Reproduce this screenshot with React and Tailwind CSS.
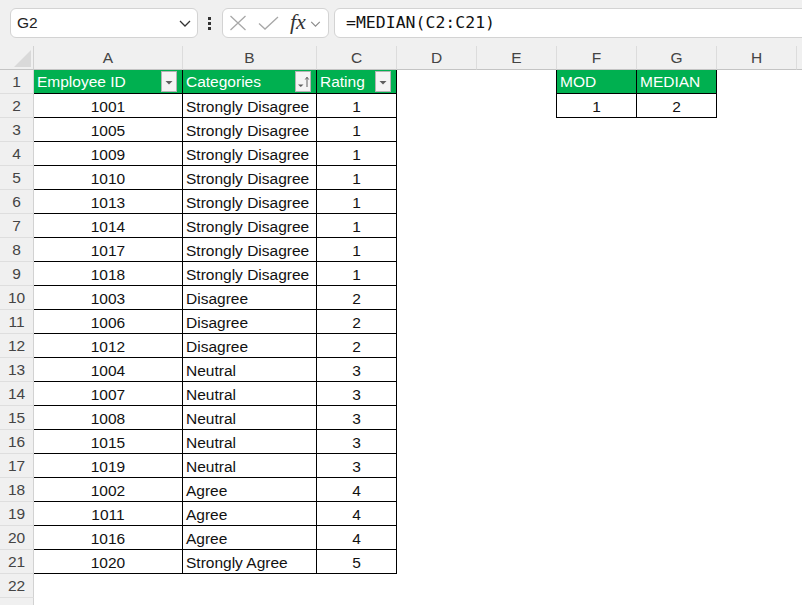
import React from "react";

const data = [
  ["1001", "Strongly Disagree", "1"],
  ["1005", "Strongly Disagree", "1"],
  ["1009", "Strongly Disagree", "1"],
  ["1010", "Strongly Disagree", "1"],
  ["1013", "Strongly Disagree", "1"],
  ["1014", "Strongly Disagree", "1"],
  ["1017", "Strongly Disagree", "1"],
  ["1018", "Strongly Disagree", "1"],
  ["1003", "Disagree", "2"],
  ["1006", "Disagree", "2"],
  ["1012", "Disagree", "2"],
  ["1004", "Neutral", "3"],
  ["1007", "Neutral", "3"],
  ["1008", "Neutral", "3"],
  ["1015", "Neutral", "3"],
  ["1019", "Neutral", "3"],
  ["1002", "Agree", "4"],
  ["1011", "Agree", "4"],
  ["1016", "Agree", "4"],
  ["1020", "Strongly Agree", "5"],
];

function Chevron({ color = "#333", w = 12, h = 7 }) {
  return (
    <svg width={w} height={h} viewBox="0 0 12 7" fill="none">
      <path d="M1 1 L6 6 L11 1" stroke={color} strokeWidth="1.3" />
    </svg>
  );
}

function FilterBtn({ sort }) {
  return (
    <div className="w-[16px] h-[21px] bg-[#f4f4f4] border border-[#b4b4b4] flex items-center justify-center shrink-0">
      {sort ? (
        <svg width="14" height="14" viewBox="0 0 14 14">
          <path d="M2 9.5 L7.5 9.5 L4.75 12 Z" fill="#5f5f5f" />
          <path d="M11 12 L11 2.5" stroke="#5f5f5f" strokeWidth="1" />
          <path d="M9.3 4.5 L11 2.2 L12.7 4.5" stroke="#5f5f5f" strokeWidth="1" fill="none" />
        </svg>
      ) : (
        <svg width="10" height="10" viewBox="0 0 10 10">
          <path d="M1.5 4 L8.5 4 L5 7.5 Z" fill="#5f5f5f" />
        </svg>
      )}
    </div>
  );
}

const colW = ["w-[149px]", "w-[134px]", "w-[80px]", "w-[80px]", "w-[80px]", "w-[80px]", "w-[80px]", "w-[80px]"];
const letters = ["A", "B", "C", "D", "E", "F", "G", "H"];

function RowHead({ n }) {
  return (
    <div className="w-[34px] shrink-0 h-full bg-[#f0f0f0] border-r border-b border-r-[#d2d2d2] border-b-[#dedede] flex items-center justify-center pt-[1px] text-[15.5px] text-[#444]">
      {n}
    </div>
  );
}

function BodyRow({ n }) {
  const inTable = n >= 1 && n <= 21;
  const inMod = n === 1 || n === 2;
  const tb = inTable ? "border-black" : "border-transparent";
  const mb = inMod ? "border-black" : "border-transparent";
  const d = n >= 2 && n <= 21 ? data[n - 2] : null;
  return (
    <div className="flex h-[24px]">
      <RowHead n={n} />
      {n === 1 ? (
        <>
          <div className="w-[149px] shrink-0 h-full border-r border-b border-black bg-[#00b050] text-white flex items-center justify-between pl-[3px] pr-[5px]">
            <span className="pt-[1px]">Employee ID</span>
            <FilterBtn />
          </div>
          <div className="w-[134px] shrink-0 h-full border-r border-b border-black bg-[#00b050] text-white flex items-center justify-between pl-[3px] pr-[5px]">
            <span className="pt-[1px]">Categories</span>
            <FilterBtn sort />
          </div>
          <div className="w-[80px] shrink-0 h-full border-r border-b border-black bg-[#00b050] text-white flex items-center justify-between pl-[3px] pr-[5px]">
            <span className="pt-[1px]">Rating</span>
            <FilterBtn />
          </div>
        </>
      ) : (
        <>
          <div className={`w-[149px] shrink-0 h-full border-r border-b ${tb} flex items-center justify-center pt-[2px] text-[#111]`}>
            {d ? d[0] : ""}
          </div>
          <div className={`w-[134px] shrink-0 h-full border-r border-b ${tb} flex items-center pl-[3px] pt-[2px] text-[#111] whitespace-nowrap`}>
            {d ? d[1] : ""}
          </div>
          <div className={`w-[80px] shrink-0 h-full border-r border-b ${tb} flex items-center justify-center pt-[2px] text-[#111]`}>
            {d ? d[2] : ""}
          </div>
        </>
      )}
      <div className="w-[80px] shrink-0 h-full" />
      <div className={`w-[80px] shrink-0 h-full border-r ${mb}`} />
      {n === 1 ? (
        <>
          <div className="w-[80px] shrink-0 h-full border-r border-b border-black bg-[#00b050] text-white flex items-center pl-[3px] pt-[1px]">MOD</div>
          <div className="w-[80px] shrink-0 h-full border-r border-b border-black bg-[#00b050] text-white flex items-center pl-[3px] pt-[1px]">MEDIAN</div>
        </>
      ) : (
        <>
          <div className={`w-[80px] shrink-0 h-full border-r border-b ${mb} flex items-center justify-center pt-[2px] text-[#111]`}>
            {n === 2 ? "1" : ""}
          </div>
          <div className={`w-[80px] shrink-0 h-full border-r border-b ${mb} flex items-center justify-center pt-[2px] text-[#111]`}>
            {n === 2 ? "2" : ""}
          </div>
        </>
      )}
      <div className="w-[80px] shrink-0 h-full" />
      <div className="flex-1 h-full" />
    </div>
  );
}

export default function App() {
  const rows = [];
  for (let i = 1; i <= 23; i++) rows.push(i);
  return (
    <div className="w-[802px] h-[605px] overflow-hidden bg-white font-['Liberation_Sans',Arial,sans-serif] text-[15.5px] leading-none">
      {/* Formula bar */}
      <div className="h-[46px] bg-[#f0f0f0] flex items-start pt-[8px]">
        <div className="ml-[10px] w-[188px] h-[30px] shrink-0 bg-white border border-[#d3d3d3] rounded-[6px] flex items-center justify-between pl-[6px] pr-[6px] text-[15.5px] text-[#222]">
          <span>G2</span>
          <Chevron color="#333" />
        </div>
        <div className="ml-[10px] w-[4px] h-[30px] flex flex-col items-center justify-center gap-[2px]">
          <div className="w-[3px] h-[3px] bg-[#333]" />
          <div className="w-[3px] h-[3px] bg-[#333]" />
          <div className="w-[3px] h-[3px] bg-[#333]" />
        </div>
        <div className="ml-[11px] w-[107px] h-[30px] shrink-0 bg-white border border-[#d3d3d3] rounded-[6px] flex items-center pl-[6px]">
          <svg width="18" height="16" viewBox="0 0 18 16" fill="none">
            <path d="M1.5 1 L16.5 15 M16.5 1 L1.5 15" stroke="#a8a8a8" strokeWidth="1.3" />
          </svg>
          <svg className="ml-[11px]" width="21" height="14" viewBox="0 0 21 14" fill="none">
            <path d="M1 7.5 L7 13 L20 1" stroke="#a8a8a8" strokeWidth="1.3" />
          </svg>
          <span className="ml-[11px] font-['Liberation_Serif',serif] italic text-[22px] text-[#333] leading-none -mt-[2px]">fx</span>
          <span className="ml-[4px] mt-[2px]">
            <Chevron color="#8a8a8a" w={11} h={6} />
          </span>
        </div>
        <div className="ml-[5px] w-[480px] h-[30px] shrink-0 bg-white border border-[#d3d3d3] rounded-l-[6px] flex items-center pl-[11px] font-['DejaVu_Sans_Mono',monospace] text-[16.5px] text-[#111]">
          =MEDIAN(C2:C21)
        </div>
      </div>
      {/* Column header */}
      <div className="flex h-[24px] bg-[#f0f0f0]">
        <div className="w-[34px] shrink-0 h-full border-r border-b border-r-[#d2d2d2] border-b-[#c4c4c4] flex items-end justify-end pr-[2px] pb-[2px]">
          <svg width="17" height="17" viewBox="0 0 17 17">
            <path d="M17 0 L17 17 L0 17 Z" fill="#d9d9d9" />
          </svg>
        </div>
        {letters.map((l, i) => (
          <div
            key={l}
            className={`${colW[i]} shrink-0 h-full border-r border-b border-r-[#dcdcdc] border-b-[#c4c4c4] flex items-center justify-center pt-[1px] text-[15.5px] text-[#444]`}
          >
            {l}
          </div>
        ))}
        <div className="flex-1 h-full border-b border-b-[#c4c4c4]" />
      </div>
      {rows.map((n) => (
        <BodyRow key={n} n={n} />
      ))}
    </div>
  );
}
